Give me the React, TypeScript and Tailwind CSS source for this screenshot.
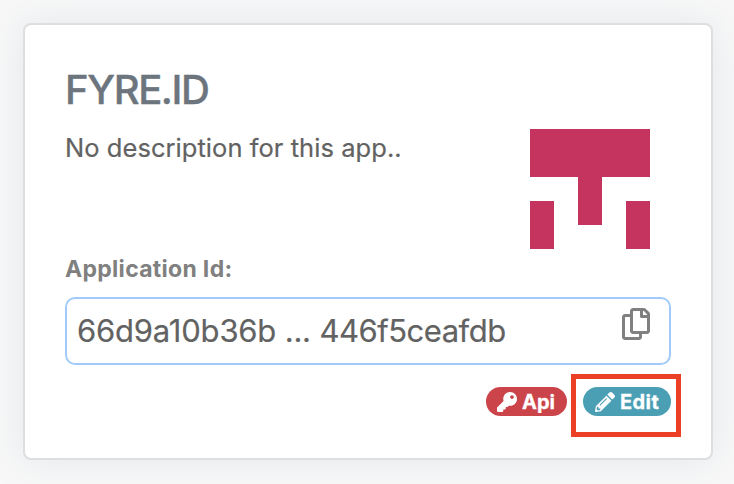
import React from "react";
import { FaKey, FaPencilAlt, FaRegCopy } from "react-icons/fa";

function Identicon() {
  return (
    <svg className="h-[120px] w-[120px]" viewBox="0 0 5 5" fill="#c5335f" shapeRendering="crispEdges">
      <path d="M0 0h5v2H3v2H2V2H0zM0 3h1v2H0zM4 3h1v2H4z" />
    </svg>
  );
}

export default function App() {
  return (
    <main className="h-[484px] w-[734px] overflow-hidden bg-[#f8f8f8] p-[23px] pr-[21px] font-['Inter','Liberation_Sans',sans-serif] text-[#626262]">
      <section className="flex h-[437px] flex-col rounded-lg border-2 border-[#dedede] bg-white px-10 pt-10 shadow-[0_0_40px_rgba(120,145,165,0.16)]">
        <div className="flex h-[160px] justify-between">
          <div>
            <h1 className="text-[40px] leading-[50px] font-medium tracking-[-1.4px] text-[#6c757d] [-webkit-text-stroke:0.4px_#6c757d]">FYRE.ID</h1>
            <p className="mt-[14px] text-[25.5px] leading-[38px] tracking-[0.05px] whitespace-nowrap [-webkit-text-stroke:0.2px_#626262]">No description for this app..</p>
          </div>
          <div className="mt-16 mr-[21px]">
            <Identicon />
          </div>
        </div>
        <h2 className="mt-[26px] text-[23px] leading-9 font-bold tracking-[0.3px] text-[#808080]">Application Id:</h2>
        <div className="mt-[10px] flex h-[68px] shrink-0 items-center justify-between rounded-[10px] border-2 border-[#a2cafa] pr-5 pl-[10px]">
          <span className="text-[31px] leading-[48px] whitespace-nowrap [-webkit-text-stroke:0.2px_#626262]">
            <span className="tracking-[-0.2px]">66d9a10b36b ... </span>
            <span className="tracking-[-0.48px]">446f5ceafdb</span>
          </span>
          <FaRegCopy className="-mr-[0.5px] mb-[14px] h-8 w-7 stroke-0 text-[#808080]" />
        </div>
        <div className="-mr-[10px] mt-[9px] flex justify-end gap-1">
          <button className="mt-[13px] flex h-[29px] w-[81px] items-center rounded-full bg-[#cb444a] pl-[11px] text-[20px] leading-none font-bold text-white">
            <FaKey className="mr-[5px] h-5 w-5 shrink-0" />
            <span className="[-webkit-text-stroke:0.3px_white]">Api</span>
          </button>
          <div className="flex h-[63px] w-[110px] justify-end border-[5px] border-[#eb4025] pt-2 pr-[5px]">
            <button className="flex h-[29px] w-[88px] items-center rounded-full bg-[#4a9fb5] pl-3 text-[20px] leading-none font-bold text-white">
              <FaPencilAlt className="mr-[5px] h-5 w-5 shrink-0" />
              <span className="tracking-[0.4px] [-webkit-text-stroke:0.3px_white]">Edit</span>
            </button>
          </div>
        </div>
      </section>
    </main>
  );
}
